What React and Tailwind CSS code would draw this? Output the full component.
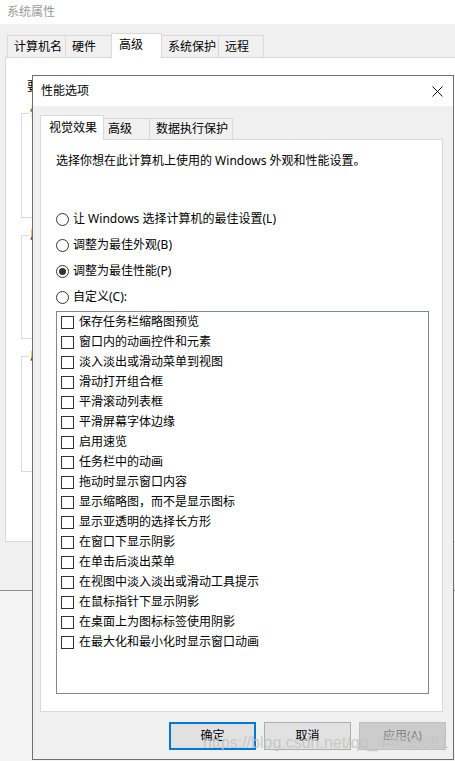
import React from "react";

const ITEMS = [
  "保存任务栏缩略图预览",
  "窗口内的动画控件和元素",
  "淡入淡出或滑动菜单到视图",
  "滑动打开组合框",
  "平滑滚动列表框",
  "平滑屏幕字体边缘",
  "启用速览",
  "任务栏中的动画",
  "拖动时显示窗口内容",
  "显示缩略图，而不是显示图标",
  "显示亚透明的选择长方形",
  "在窗口下显示阴影",
  "在单击后淡出菜单",
  "在视图中淡入淡出或滑动工具提示",
  "在鼠标指针下显示阴影",
  "在桌面上为图标标签使用阴影",
  "在最大化和最小化时显示窗口动画",
];

const RADIOS = [
  { label: "让 Windows 选择计算机的最佳设置(L)", on: false },
  { label: "调整为最佳外观(B)", on: false },
  { label: "调整为最佳性能(P)", on: true },
  { label: "自定义(C):", on: false },
];

const BG_TABS = [
  { label: "计算机名", w: "w-[59px]" },
  { label: "硬件", w: "w-[47px]" },
  { label: "高级", w: "w-[51px]", active: true },
  { label: "系统保护", w: "w-[58px]" },
  { label: "远程", w: "w-[46px]" },
];

function GroupBox({ label, className }) {
  return (
    <div className={`relative border border-[#dcdcdc] w-[430px] ${className}`}>
      <span className="absolute -top-[9px] left-[7px] bg-white px-[1px] leading-[16px]">{label}</span>
    </div>
  );
}

function Radio({ on }) {
  return (
    <span className="w-[13px] h-[13px] rounded-full border border-[#333] bg-white flex items-center justify-center shrink-0">
      {on && <span className="w-[7px] h-[7px] rounded-full bg-[#333]" />}
    </span>
  );
}

export default function App() {
  return (
    <div className="relative w-[455px] h-[761px] overflow-hidden bg-[#f4f4f4] text-[12px] text-black font-['Noto_Sans','Noto_Sans_CJK_SC',sans-serif]">
      {/* 系统属性 (behind) */}
      <div className="h-[591px] bg-[#f0f0f0] border-b border-[#8c8c8c] flex flex-col">
        <div className="h-[24px] bg-white flex items-center pl-[7px] text-[#9a9a9a] leading-none">系统属性</div>
        <div className="flex-1 pl-[5px] pt-[9px]">
          <div className="relative z-10 flex items-end h-[25px] -mb-px pl-[2px]">
            {BG_TABS.map((t) =>
              t.active ? (
                <div key={t.label} className={`${t.w} h-[25px] bg-white border border-b-0 border-[#d9d9d9] -ml-px flex items-center pl-[7px] pb-[2px]`}>
                  {t.label}
                </div>
              ) : (
                <div key={t.label} className={`${t.w} h-[23px] border border-[#d9d9d9] -ml-px first:ml-0 flex items-center pl-[6px]`}>
                  {t.label}
                </div>
              )
            )}
          </div>
          <div className="w-[480px] h-[485px] bg-white border border-[#d9d9d9] pl-[15px] pt-[21px]">
            <div className="pl-[6px] leading-[16px]">要进行大多数更改，你必须作为管理员登录。</div>
            <GroupBox label="性能" className="mt-[18px] h-[105px]" />
            <GroupBox label="用户配置文件" className="mt-[17px] h-[104px]" />
            <GroupBox label="启动和故障恢复" className="mt-[17px] h-[116px]" />
          </div>
        </div>
      </div>

      {/* 性能选项 dialog */}
      <div className="absolute left-[32px] top-[75px] w-[422px] h-[685px] border border-[#6f6f6f] bg-[#f0f0f0] flex flex-col">
        <div className="h-[30px] bg-white flex items-center justify-between pl-[8px] pr-[10px]">
          <span className="leading-none">性能选项</span>
          <svg width="11" height="11" viewBox="0 0 11 11" className="shrink-0">
            <path d="M0.5 0.5 L10.5 10.5 M10.5 0.5 L0.5 10.5" stroke="#111" strokeWidth="1" fill="none" />
          </svg>
        </div>

        <div className="flex-1 flex flex-col pt-[9px] pl-[7px] pr-[10px] pb-[9px]">
          <div className="relative z-10 flex items-end h-[25px] -mb-px">
            <div className="w-[64px] h-[25px] bg-white border border-b-0 border-[#d9d9d9] flex items-center pl-[8px] pb-[1px]">视觉效果</div>
            <div className="w-[46px] h-[22px] border border-l-0 border-[#d9d9d9] flex items-center pl-[4px]">高级</div>
            <div className="w-[83px] h-[22px] border border-l-0 border-[#d9d9d9] flex items-center pl-[6px]">数据执行保护</div>
          </div>

          <div className="flex-1 bg-white border border-[#d9d9d9] pl-[15px] pt-[13px]">
            <div className="leading-[16px]">选择你想在此计算机上使用的 Windows 外观和性能设置。</div>

            <div className="mt-[37px] flex flex-col">
              {RADIOS.map((r) => (
                <div key={r.label} className="h-[26px] flex items-center gap-[4px]">
                  <Radio on={r.on} />
                  <span className="leading-none">{r.label}</span>
                </div>
              ))}
            </div>

            <div className="mt-px w-[373px] h-[383px] border border-[#828790] bg-white pl-[4px]">
              {ITEMS.map((it) => (
                <div key={it} className="h-[20px] flex items-center gap-[5px]">
                  <span className="w-[13px] h-[13px] border border-[#333] bg-white shrink-0" />
                  <span className="leading-none">{it}</span>
                </div>
              ))}
            </div>
          </div>

          <div className="mt-[10px] flex justify-end gap-[8px] -mr-[3px]">
            <button className="w-[87px] h-[28px] bg-[#e1e1e1] border-2 border-[#0078d7] leading-none">确定</button>
            <button className="w-[87px] h-[28px] bg-[#e1e1e1] border border-[#adadad] leading-none">取消</button>
            <button className="w-[87px] h-[28px] bg-[#cccccc] border border-[#bfbfbf] text-[#838383] leading-none">应用(A)</button>
          </div>
        </div>
      </div>

      {/* watermark */}
      <div className="absolute left-[203px] top-[734px] text-[16px] leading-[18px] text-[#c4c4c4]/90 font-['Liberation_Sans',sans-serif] pointer-events-none whitespace-nowrap">
        https://blog.csdn.net/qq_44895681
      </div>
    </div>
  );
}
